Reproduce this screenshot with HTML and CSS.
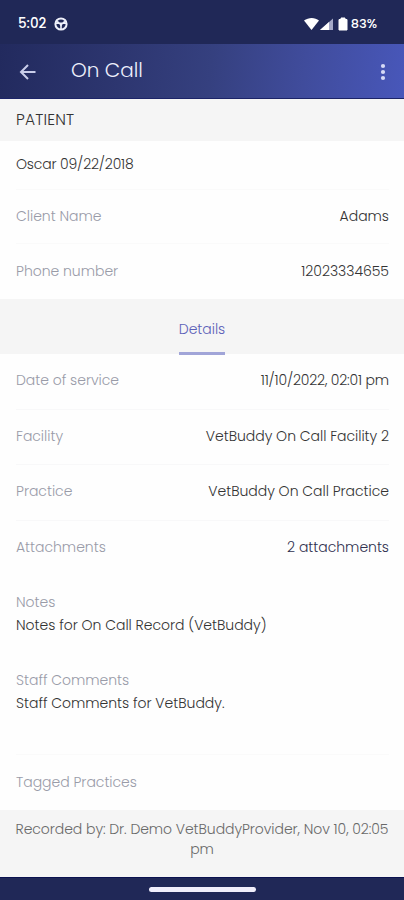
FILE: index.html
```html
<!DOCTYPE html>
<html lang="en">
<head>
  <meta charset="UTF-8">
  <meta name="viewport" content="width=device-width, initial-scale=1.0">
  <title>On Call</title>
  <link rel="stylesheet" href="styles.css">
</head>
<body>
  <div class="screen">
    <div class="status-bar">
      <span class="time">5:02</span>
      <svg class="wheel" width="14" height="14" viewBox="0 0 14 14">
        <circle cx="7" cy="7" r="5.600" fill="none" stroke="#eef0fb" stroke-width="2"/>
        <path d="M2 6.200h10M7 7v5.500M3 4.500L5 6M11 4.500L9 6" stroke="#eef0fb" stroke-width="1.600"/>
        <path d="M4.500 6h5L7 9.500z" fill="#eef0fb"/>
      </svg>
      <div class="status-icons">
        <svg width="46" height="16" viewBox="0 0 46 16">
          <path d="M0 4.500C4.500 1 11 1 15 4.500L7.500 14z" fill="#fff"/>
          <path d="M16 14L29 2.500V14z" fill="#a5a9c7"/>
          <path d="M16 14L25 6V14z" fill="#fff"/>
          <path d="M37 2h4v1.500h2V14h-8V3.500H37z" fill="#fff" stroke="#fff" stroke-linejoin="round"/>
        </svg>
        <span class="battery">83%</span>
      </div>
    </div>

    <div class="app-bar">
      <svg class="back" width="18" height="18" viewBox="0 0 18 18" fill="none" stroke="#c9cdea" stroke-width="2">
        <path d="M16.500 9H2.500M9 2L2 9l7 7"/>
      </svg>
      <span class="title">On Call</span>
      <svg class="more" width="6" height="18" viewBox="0 0 6 18" fill="#d6daf6">
        <circle cx="3" cy="3" r="2.100"/>
        <circle cx="3" cy="9" r="2.100"/>
        <circle cx="3" cy="15" r="2.100"/>
      </svg>
    </div>

    <div class="section-title"><span>PATIENT</span></div>
    <div class="row row-name"><span class="value compact">Oscar 09/22/2018</span></div>
    <div class="row row-client"><span class="label">Client Name</span><span class="value">Adams</span></div>
    <div class="row row-phone"><span class="label">Phone number</span><span class="value">12023334655</span></div>

    <div class="tabs"><span class="tab">Details</span></div>

    <div class="row"><span class="label">Date of service</span><span class="value compact">11/10/2022, 02:01 pm</span></div>
    <div class="row"><span class="label">Facility</span><span class="value">VetBuddy On Call Facility 2</span></div>
    <div class="row"><span class="label">Practice</span><span class="value">VetBuddy On Call Practice</span></div>
    <div class="row row-last"><span class="label">Attachments</span><span class="value link">2 attachments</span></div>

    <div class="note">
      <span class="label">Notes</span>
      <span class="value">Notes for On Call Record (VetBuddy)</span>
    </div>
    <div class="note note-staff">
      <span class="label">Staff Comments</span>
      <span class="value">Staff Comments for VetBuddy.</span>
    </div>
    <div class="row row-tagged"><span class="label">Tagged Practices</span></div>

    <div class="recorded">Recorded by: Dr. Demo VetBuddyProvider, Nov 10, 02:05 pm</div>
    <div class="nav-bar"><div class="handle"></div></div>
  </div>
</body>
</html>
```

FILE: styles.css
```css
* {
  box-sizing: border-box;
}
body {
  margin: 0;
  background: #fefefe;
  font-family: Poppins, Inter, "Liberation Sans", sans-serif;
  font-size: 14px;
  font-weight: 300;
  letter-spacing: -0.02px;
  color: #333;
}
.screen {
  display: flex;
  flex-direction: column;
  width: 404px;
  height: 900px;
  overflow: hidden;
}
.status-bar {
  display: flex;
  align-items: center;
  height: 44px;
  padding: 3px 27px 0 18px;
  background: #202857;
  color: #fff;
  font-size: 13.500px;
  font-weight: 500;
}
.wheel {
  margin-left: 8px;
}
.status-icons {
  display: flex;
  align-items: center;
  gap: 1px;
  margin-left: auto;
}
.battery {
  font-size: 13px;
}
.app-bar {
  display: flex;
  align-items: center;
  height: 55px;
  padding: 2px 18px 0 19px;
  background: linear-gradient(97deg, #222a5e 0%, #2d3670 30%, #35407f 52%, #404c9c 75%, #4857ba 100%);
  border-bottom: 1px solid #1c2468;
}
.title {
  margin: -5px 0 0 34px;
  font-size: 20px;
  color: #eceefb;
}
.more {
  margin-left: auto;
}
.section-title {
  display: flex;
  align-items: center;
  height: 42px;
  padding: 0 16px 2px;
  background: #f5f5f5;
  font-size: 15.500px;
  letter-spacing: 0.2px;
}
.row {
  display: flex;
  align-items: center;
  justify-content: space-between;
  height: 55.5px;
  margin: 0 15px 0 16px;
  padding-bottom: 1px;
  border-bottom: 1px solid #f8f8f9;
}
.row-name {
  height: 49px;
  border-color: #fafafa;
}
.row-client {
  height: 54px;
  border-color: #fafafa;
}
.row-phone {
  height: 55px;
  border: 0;
}
.row-last {
  border: 0;
}
.row-tagged {
  height: 55px;
  padding: 0;
  border: 0;
}
.compact {
  letter-spacing: -0.17px;
}
.label {
  color: #999ba8;
}
.link {
  color: #30304f;
}
.tabs {
  display: flex;
  justify-content: center;
  height: 55px;
  background: #f5f5f5;
}
.tab {
  height: 56px;
  padding-top: 20px;
  border-bottom: 3px solid #a1a5d8;
  color: #5b60b8;
}
.note {
  display: flex;
  flex-direction: column;
  gap: 3px;
  height: 78px;
  padding: 16px 16px 0;
  line-height: 20px;
}
.note-staff {
  height: 101px;
  margin: 0 15px 0 16px;
  padding: 16px 0 0;
  border-bottom: 1px solid #fafafa;
}
.recorded {
  height: 67px;
  padding: 10px 14px 0;
  background: #f5f5f5;
  color: #696969;
  line-height: 19.500px;
  letter-spacing: -0.06px;
  text-align: center;
}
.nav-bar {
  display: flex;
  flex: 1;
  align-items: center;
  justify-content: center;
  background: #202857;
  border-top: 1px solid #0b1250;
}
.handle {
  width: 107px;
  height: 5px;
  border-radius: 3px;
  background: #f0eefb;
}
```
